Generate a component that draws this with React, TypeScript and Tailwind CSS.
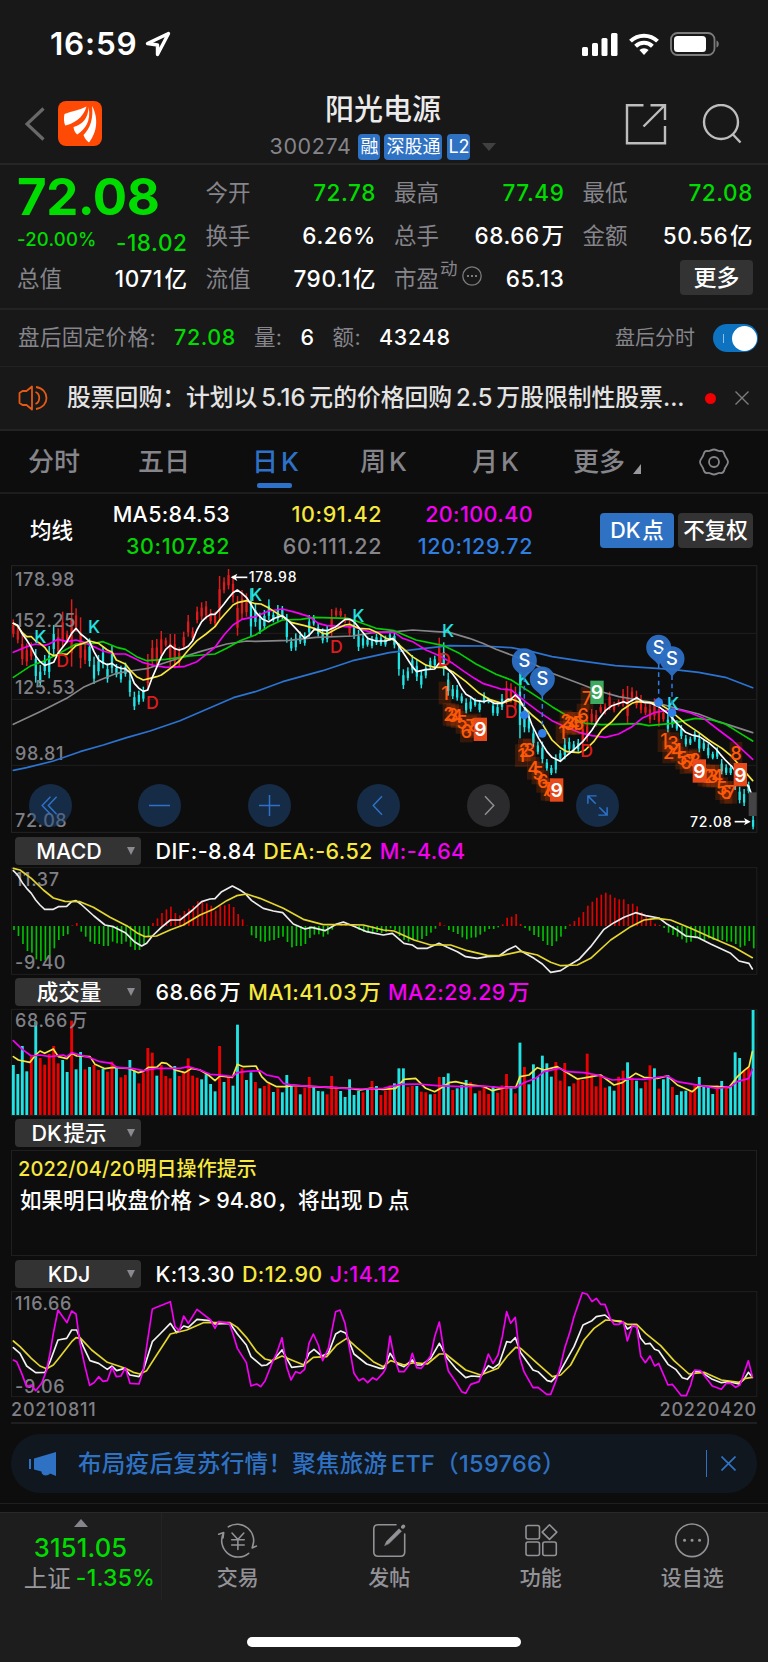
import type { ReactNode } from 'react';
import clsx from 'clsx';

// Charts are drawn in a 3x grid: 2304 units across the 768px screen
const STEP = 13.45;
const barX = (i: number) => 40 + i * STEP;

const RED = '#df1b1e';
const CYAN = '#21e3e3';
const YELLOW = '#f7e83e';
const PINK = '#f500f5';

const shift = (dx: number, pts: string) => pts.trim().split(/\s+/).map((p) => { const [x, y] = p.split(','); return `${Number(x) + dx},${y}`; }).join(' ');

const candles = `r178-232 r195-250 r225-315 r250-318 r247-300 c267-368 c315-382 c285-345 c258-355 c195-285 r205-290 r155-262 r212-250 r118-320 r145-215 r172-325 r250-312 c235-320 c290-372 c285-346 c258-325 c310-368 c257-340 c312-352 c317-368 c308-350 c340-410 c395-450 c392-434 c380-425
r282-392 r240-320 r237-322 r213-297 r233-260 r222-318 r222-325 r262-320 r215-268 r165-230 r202-242 r140-190 r127-180 r123-178 r147-192 r155-198 r48-180 r52-100 r27-88 r47-128 r108-227 r90-178 r100-170 c85-228 c130-200 c158-222 c150-210 c118-180 c155-187 c135-185
c138-178 c162-248 c233-273 c220-272 c215-252 c217-257 c165-230 c165-197 c190-230 c205-250 c198-247 r147-230 r143-172 r145-172 r162-190 r175-230 c182-237 c210-273 c222-265 c230-260 c228-265 c222-255 c225-258 c227-260 c215-243 c212-265 c250-347 c328-387 c322-362 c285-340
c298-363 c330-385 c312-355 c293-327 c287-323 r233-320 c247-347 c338-407 c375-417 c375-422 c400-430 c415-460 c412-455 c415-440 c420-457 c397-430 c413-430 c425-467 c430-468 c402-450 r363-433 r370-428 r380-450 c335-535 c440-517 c460-517 c503-560 c545-583 c545-610 c597-632
c615-645 c583-640 c570-603 c535-598 c533-575 c543-577 c537-575 r485-557 r480-545 r447-495 r450-500 r433-460 r430-463 r395-450 r425-457 r418-440 r387-440 r378-490 r382-425 r392-445 r405-460 r430-465 r430-490 r415-480 r425-500 r448-485 c463-517 c455-503 c480-512 c495-537
c525-560 c530-555 c513-545 c520-577 c540-573 c550-595 c575-598 c562-597 c597-643 c613-645 c615-645 c635-690 c680-730 c687-738 c665-700 c768-808`.split(/\s+/).map((s) => { const [top, bottom] = s.slice(1).split('-').map(Number); return { up: s[0] === 'r', top, bottom }; });

const ma5 = [
  shift(0, '40,190 53,196 67,222 80,240 94,262 107,288 120,305 134,316 147,312 161,307 174,280 188,262 201,245 215,220 228,205 242,222 255,232 269,245 282,275 296,300 309,308 322,314 336,310 349,320 363,325 376,326 390,338 403,370 417,385 430,394 443,390 457,352 470,322 484,290 497,268 511,256 524,266 538,270 551,266 565,258 578,242 591,210 605,185 618,172 632,163 645,163 659,148 672,132 685,115 699,98 712,90 726,100 739,112 753,133 766,155'),
  shift(768, '20,178 38,185 55,175 79,167 95,180 119,205 146,235 160,225 175,208 213,212 240,200 267,178 281,178 294,185 308,202 335,235 360,243 390,243 410,235 420,245 442,278 469,320 482,335 509,329 536,327 549,310 563,313 576,328 590,342 603,360 617,385 630,403 643,410 657,421 684,425 697,420 715,430 738,430 755,418 765,417'),
  shift(1536, '10,405 20,415 45,455 60,495 80,535 105,575 120,592 145,604 160,590 185,570 212,545 240,510 260,478 280,452 300,437 335,425 345,430 374,413 395,427 414,428 440,440 470,462 490,485 521,517 540,525 562,530 590,548 610,565 625,583 640,600 660,620 690,660 710,680 722,712'),
].join(' ');
const ma10 = [
  shift(0, '40,190 53,198 67,218 80,230 94,230 107,243 120,250 134,262 147,280 161,287 188,282 201,283 215,270 228,257 269,243 296,250 322,270 336,276 349,300 376,312 390,330 410,350 430,360 450,355 470,350 484,345 511,325 538,303 565,270 591,242 618,222 645,200 659,180 672,165 699,135 712,128 740,122 766,131'),
  shift(768, '15,132 40,145 79,170 105,187 146,197 175,205 200,220 213,222 240,207 267,195 281,193 308,205 340,207 365,218 390,235 415,240 435,260 469,290 509,315 536,322 563,322 590,335 630,365 670,400 700,418 738,430 766,420'),
  shift(1536, '0,418 20,425 60,465 90,490 120,540 145,563 165,575 200,578 220,570 245,545 270,510 300,485 330,450 360,430 374,425 440,430 475,452 520,490 560,517 590,540 630,565 660,590 690,625 722,662'),
].join(' ');
const ma20 = [
  shift(0, '40,277 80,260 107,252 134,256 147,252 174,238 201,245 228,240 255,248 282,260 309,273 345,282 376,282 403,295 430,308 457,315 497,322 551,320 591,305 645,262 672,225 699,195 726,178 766,170'),
  shift(768, '38,153 79,147 119,157 160,170 187,190 213,197 240,198 267,200 294,200 321,210 350,217 415,217 440,235 470,245 510,270 550,287 590,310 625,335 655,355 680,370 735,387 766,390'),
  shift(1536, '0,392 40,425 80,455 120,482 160,500 200,517 240,527 280,532 320,522 360,500 390,475 430,457 490,447 530,457 575,475 620,510 660,540 722,598'),
].join(' ');
const ma30 = [
  shift(0, '40,352 93,317 134,302 174,282 228,252 282,250 309,245 350,262 376,268 410,290 440,302 497,298 570,288 645,282 680,265 720,242 766,225'),
  shift(768, '40,198 79,180 135,178 173,172 275,175 300,183 360,205 415,212 480,240 563,257 610,280 660,312 720,343 766,360'),
  shift(1536, '60,400 120,440 170,470 220,490 270,494 380,491 410,497 480,490 550,475 600,480 640,492 680,517 722,543'),
].join(' ');
const ma60 = [
  shift(0, '40,493 120,455 200,415 250,382 300,360 350,340 390,333 445,325 520,300 600,275 680,252 740,243 766,244'),
  shift(768, '100,241 180,232 290,228 350,218 420,215 470,210 540,215 580,217 640,235 680,250 720,268 766,285'),
  shift(1536, '60,310 120,340 200,370 260,393 320,410 380,420 440,430 500,447 560,462 620,485 722,518'),
].join(' ');
const ma120 = [
  shift(0, '40,631 80,623 160,603 240,575 310,555 380,533 450,513 540,482 620,448 700,413 766,395'),
  shift(768, '80,365 200,332 290,302 400,278 480,268 580,257 680,258 766,263'),
  shift(1536, '60,275 120,290 200,302 310,317 400,323 480,328 560,337 640,352 722,383'),
].join(' ');

const signals: [string, number, number][] = [
  ['K', 103, 250], ['K', 264, 218], ['K', 750, 122], ['K', 1057, 187], ['K', 1326, 232], ['K', 1555, 375], ['K', 2001, 449],
  ['D', 169, 320], ['D', 438, 447], ['D', 990, 280], ['D', 1314, 317], ['D', 1514, 473], ['D', 1741, 591],
];

// [digit, centre x, centre y]
const counts: [number, number, number][] = [
  [1, 1335, 399], [2, 1347, 463], [3, 1358, 466], [4, 1371, 470], [5, 1386, 487], [7, 1412, 500], [8, 1424, 495], [6, 1399, 513],
  [1, 1564, 587], [2, 1573, 570], [3, 1588, 570], [4, 1600, 625], [5, 1614, 639], [6, 1628, 664], [7, 1641, 688], [8, 1654, 690],
  [1, 1686, 517], [2, 1698, 485], [3, 1708, 490], [4, 1721, 490], [5, 1735, 490], [6, 1749, 465], [7, 1761, 415],
  [1, 1992, 542], [2, 2006, 576], [3, 2019, 551], [4, 2031, 570], [5, 2045, 594], [6, 2058, 608], [7, 2072, 605], [8, 2085, 600],
  [1, 2112, 645], [2, 2126, 648], [3, 2138, 648], [4, 2152, 648], [5, 2165, 686], [6, 2178, 697], [7, 2192, 697], [8, 2208, 580],
];
const nines: [number, number, string][] = [[1441, 508, '#e8491a'], [1670, 690, '#e8491a'], [1791, 397, '#3dab5f'], [2098, 633, '#e8491a'], [2221, 644, '#e8491a']];
const pins: [number, number, number][] = [[1573, 302, 465], [1627, 357, 520], [1976, 262, 427], [2016, 296, 458]];

const macdBars = [300, 318, 342, 363, 368, 388, 393, 390, 375, 355, 330, 318, 313, 286, 279, 305, 320, 335, 342, 342, 348, 348, 335, 340, 342, 335, 350, 360, 360, 343, 322, 279, 265, 249, 238, 230, 249, 256, 243, 236, 227, 214, 215, 220, 227, 242, 228, 226, 222, 231, 252, 268, 287, 316, 324, 334, 336, 332, 330, 324, 320, 336, 352, 348, 348, 342, 324, 314, 313, 320, 313, 299, 288, 281, 281, 285, 290, 300, 306, 308, 311, 306, 309, 306, 295, 300, 318, 330, 335, 330, 330, 327, 318, 308, 296, 277, 286, 300, 306, 312, 322, 328, 323, 322, 314, 305, 297, 297, 292, 283, 263, 260, 252, 282, 294, 302, 315, 321, 333, 345, 348, 334, 320, 297, 283, 273, 262, 246, 227, 215, 203, 194, 188, 194, 203, 208, 208, 222, 221, 229, 247, 260, 265, 281, 285, 294, 308, 315, 320, 328, 338, 335, 325, 325, 330, 325, 330, 330, 330, 335, 335, 342, 352, 347, 333, 355];
const dif = [
  shift(0, '40,122 53,135 67,158 80,175 94,190 107,210 120,225 134,238 160,238 175,230 200,229 215,215 228,212 242,222 282,258 315,285 340,290 376,308 403,335 425,348 440,340 457,318 484,292 511,270 540,270 578,240 605,215 630,207 645,206 665,185 697,168 720,180 735,190 755,212 790,235 820,243 848,248 880,282 915,297 935,292 975,302 1010,282 1030,276 1065,290 1100,305 1150,315'),
  shift(1152, '25,310 60,340 85,345 100,355 130,355 165,340 190,352 220,365 245,380 280,385 310,380 345,378 370,360 395,348 410,362 450,385 475,402 500,427 530,422 545,412 585,388 620,350 660,298 690,278 720,262 755,248 785,257 825,264 850,283 880,300 905,318 940,322 980,342 1040,370 1065,393 1095,400 1105,417'),
].join(' ');
const dea = [
  shift(0, '40,115 60,120 94,145 130,180 160,204 195,214 240,215 280,232 330,262 380,287 410,308 435,320 470,318 510,300 550,285 600,255 640,238 680,212 710,197 740,192 780,205 850,235 910,268 970,284 1030,284 1090,285 1150,300'),
  shift(1152, '30,303 90,330 140,345 200,345 250,362 310,376 350,377 410,364 460,375 500,397 530,407 580,405 620,385 680,330 740,290 780,270 820,265 860,270 920,295 980,322 1050,352 1105,383'),
].join(' ');

const volumes = `c705 c732 c648 c724 r680 c575 r684 r704 r672 r648 r700 c690 c726 r572 c718 c666 r718 c711 r705 r720 c716 r725 r695 c713 r742 r735 c690 c722 r760 r728 r654 r668 c737 r705 r738 r745 c708 r738 r728 r685 r737 r743 c748 c733 c762 c784 r648 c756 r740 c767 c584 r715 c750 c727 r756 c775 r768 r760 c786 r775 c787 c735 c767 r770 c793 r773 r741 c772 c783 c784 r793 r738 r770 c783 c801 c748 c795 c783 r787 c778 r753 c768 r795
r782 r766 c760 c715 c715 r771 r768 c768 r785 r787 c793 r792 r741 c741 c730 r780 c775 c765 c750 r757 c790 r782 r773 r792 c768 r788 r766 r732 c770 r790 c638 r711 c763 c703 c740 c677 c700 c740 r696 r752 r699 c769 r760 r743 r750 r671 r733 r769 r735 r773 c769 c782 r740 r722 c697 r743 c752 c775 r755 r706 c715 r776 c748 c735 r771 c795 c784 c782 r782 r766 c741 c768 c772 c792 r766 c753 r772 c768 c667 c684 r722 r713 c540`.split(/\s+/);
const volMa1 = [
  shift(0, '40,680 55,690 90,697 107,675 120,663 134,670 160,657 175,680 201,686 215,670 230,678 270,680 285,703 315,716 340,712 385,715 415,728 430,724 445,712 470,712 485,698 500,700 525,720 555,728 575,715 600,720 625,735 645,752 660,738 697,742 712,703 730,710 768,708 785,740 800,755 830,770 860,770 880,766 940,770 1000,773 1050,775 1080,780 1110,775 1150,778'),
  shift(1152, '35,775 60,748 95,745 125,775 152,785 170,775 195,758 215,755 250,763 300,770 325,782 365,772 395,772 408,740 435,735 460,713 480,720 520,710 545,725 580,747 610,742 650,735 690,765 715,758 755,730 780,742 820,745 850,738 880,765 925,785 945,768 1000,770 1035,772 1060,740 1080,722 1095,710 1105,665'),
].join(' ');
const volMa2 = [
  shift(0, '40,632 67,658 94,678 120,675 150,680 190,675 200,680 215,668 240,675 270,683 300,695 335,700 350,712 400,716 430,722 470,715 540,715 565,710 600,720 630,733 660,735 697,740 712,728 740,724 780,722 800,735 835,742 850,760 880,766 950,770 1040,775 1090,777 1150,775'),
  shift(1152, '50,763 100,762 160,767 230,770 300,768 350,773 375,773 395,773 420,758 455,745 480,725 525,715 550,725 600,728 640,735 685,750 730,747 780,748 850,738 880,755 950,767 1000,775 1040,770 1060,755 1095,745 1105,718'),
].join(' ');

const kdjJ = [
  shift(0, '40,750 50,755 65,790 80,830 94,825 107,842 125,820 140,780 150,730 160,670 174,600 201,638 215,603 228,612 240,700 255,770 269,826 282,818 296,800 309,814 322,812 336,772 349,800 363,798 376,773 390,820 417,822 430,780 440,710 457,597 511,575 525,650 538,662 551,618 565,640 591,598 632,630 645,655 655,635 688,640 700,675 712,715 739,758 753,828 770,822 782,830 795,813 820,750 830,730 846,683 860,770 873,810 887,785 900,790 914,778 927,700 940,672 955,705 968,752 985,715 1007,605 1020,600 1035,640 1062,790 1077,812 1090,805 1103,818 1118,803 1130,810 1150,788'),
  shift(1152, '5,775 18,678 30,740 45,785 60,785 75,765 85,730 98,773 112,775 140,738 152,680 166,636 180,725 193,783 215,815 233,845 245,850 260,823 285,815 300,775 313,732 327,760 342,735 355,680 368,605 380,640 394,622 408,745 420,785 447,833 462,832 488,853 500,853 515,815 530,765 542,715 558,665 570,620 595,548 610,553 624,575 637,565 650,583 663,583 680,628 690,643 705,643 718,635 730,693 745,647 758,650 770,738 784,758 798,738 812,768 824,760 852,825 865,823 892,857 907,857 920,825 932,780 950,782 985,828 1012,838 1027,820 1040,820 1055,832 1068,825 1080,790 1093,752 1105,800'),
].join(' ');
const kdjK = [
  shift(0, '40,713 60,730 80,768 107,788 135,787 150,755 174,690 200,685 215,660 230,660 250,710 270,752 296,760 322,778 336,768 350,782 374,775 390,795 417,800 430,780 457,695 480,672 511,640 530,668 551,648 565,652 591,628 630,632 645,642 690,640 712,672 739,705 753,740 785,767 800,765 820,750 846,720 860,745 875,772 910,768 927,730 942,718 965,738 985,730 1007,672 1022,663 1038,670 1062,732 1100,762 1140,775 1150,775'),
  shift(1152, '5,765 18,730 40,762 60,770 85,750 98,765 112,765 140,745 166,700 190,745 215,775 245,803 262,798 290,800 313,767 327,775 345,762 368,695 380,697 394,683 410,728 447,780 462,785 490,812 502,815 525,790 570,710 597,645 624,632 637,620 663,615 680,630 718,637 730,657 745,648 758,650 770,685 784,702 798,700 812,718 824,722 852,763 875,778 895,803 910,808 930,785 950,785 985,808 1012,818 1035,815 1065,822 1080,808 1093,787 1105,802'),
].join(' ');
const kdjD = [
  shift(0, '40,693 60,710 94,745 120,768 140,776 160,765 180,740 215,695 228,683 242,685 275,720 322,757 376,775 400,787 420,792 440,782 470,735 511,672 560,660 610,638 690,638 712,652 739,682 770,725 795,747 815,752 846,738 880,752 912,765 940,742 980,740 1010,705 1040,685 1070,712 1120,755 1150,770'),
  shift(1152, '20,752 60,765 90,758 130,762 166,732 185,732 245,780 290,795 342,775 370,738 395,712 410,715 460,760 505,800 530,795 560,765 600,690 630,655 665,630 710,633 730,643 758,643 785,670 830,707 870,752 915,792 960,787 1012,810 1065,817 1085,805 1105,802'),
].join(' ');

function Line({ points, color, width = 5 }: { points: string; color: string; width?: number }) {
  return <polyline points={points} fill="none" stroke={color} strokeWidth={width} strokeLinejoin="round" strokeLinecap="round" />;
}

function AxisText({ y, children }: { y: number; children: ReactNode }) {
  return <text x={45} y={y} fontSize={54} fontWeight={500} fill="#808086" letterSpacing={1.8} wordSpacing={-12}>{children}</text>;
}

function Frame({ top, bottom, stroke = '#1f1f20' }: { top: number; bottom: number; stroke?: string }) {
  return <rect x={34.5} y={top} width={2236} height={bottom - top} fill="none" stroke={stroke} strokeWidth={3} />;
}

function PriceChart() {
  return (
    <svg viewBox="0 12 2304 810" className="block w-full h-[270px]">
      <Frame top={17} bottom={817} stroke="#242425" />
      {[220, 418, 616].map((y) => <path key={y} d={`M34 ${y}H2270`} stroke="#1f1f20" strokeWidth={3} />)}
      {candles.map((c, i) => {
        const h = c.bottom - c.top;
        return (
          <g key={i} fill={c.up ? RED : CYAN}>
            <rect x={barX(i) - 2.2} y={c.top} width={4.4} height={h} />
            <rect x={barX(i) - 3.4} y={c.top + h * 0.3} width={6.8} height={h * 0.5} />
          </g>
        );
      })}
      <AxisText y={78}>178.98</AxisText>
      <AxisText y={202}>152.25</AxisText>
      <AxisText y={401}>125.53</AxisText>
      <AxisText y={599}>98.81</AxisText>
      <AxisText y={800}>72.08</AxisText>
      <Line points={ma120} color="#2b74d2" />
      <Line points={ma60} color="#85858a" />
      <Line points={ma30} color="#04cf04" />
      <Line points={ma20} color={PINK} />
      <Line points={ma10} color={YELLOW} />
      <Line points={ma5} color="#fff" />
      {signals.map(([s, x, y]) => <text key={`${s}${x}`} x={x} y={y} fontSize={53} fontWeight={500} fill={s === 'K' ? CYAN : RED}>{s}</text>)}
      {counts.map(([n, x, y]) => (
        <g key={`${n}-${x}`}>
          <rect x={x - 19} y={y - 34} width={38} height={68} fill="#ff5500" fillOpacity={0.17} />
          <text x={x} y={y + 20} fontSize={55} fontWeight={500} fill="#ff5a0a" textAnchor="middle">{n}</text>
        </g>
      ))}
      {nines.map(([x, y, color]) => (
        <g key={x}>
          <rect x={x - 20} y={y - 35} width={40} height={70} fill={color} />
          <text x={x} y={y + 21} fontSize={58} fontWeight={600} fill="#fff" textAnchor="middle">9</text>
        </g>
      ))}
      {pins.map(([x, y, dot]) => (
        <g key={x}>
          <path d={`M${x} ${y + 50}V${dot}`} stroke="#2f7ee6" strokeWidth={4.5} strokeDasharray="14 11" />
          <circle cx={x} cy={dot} r={13} fill="#2f7ee6" />
          <path d={`M${x - 37.5} ${y}a37.5 37.5 0 1 1 75 0c0 24-18 34-27 42l-10.500 12-10.500-12c-9-8-27-18-27-42z`} fill="#2d6fc4" fillOpacity={0.95} />
          <text x={x} y={y + 19} fontSize={55} fontWeight={500} fill="#fff" textAnchor="middle">S</text>
        </g>
      ))}
      <rect x={2246} y={697} width={24} height={71} fill="#444446" />
      <path d="M700 52h42" stroke="#fff" strokeWidth={5} />
      <path d="M692 52l20-11-5 11 5 11z" fill="#fff" />
      <text x={746} y={67} fontSize={42} fontWeight={500} fill="#fff" letterSpacing={2.4}>178.98</text>
      <text x={2070} y={801} fontSize={42} fontWeight={500} fill="#fff" letterSpacing={2.4}>72.08</text>
      <path d="M2204 785h40" stroke="#fff" strokeWidth={5} />
      <path d="M2252 785l-20-11 5 11-5 11z" fill="#fff" />
    </svg>
  );
}

function MacdChart() {
  return (
    <svg viewBox="0 108 2304 330" className="block w-full h-[110px]">
      <Frame top={113} bottom={433} />
      <AxisText y={167}>11.37</AxisText>
      <AxisText y={418}>-9.40</AxisText>
      {macdBars.map((y, i) => <rect key={i} x={barX(i) - 0.5} y={Math.min(288, y)} width={5} height={Math.abs(y - 288)} fill={y < 288 ? '#e00000' : '#00c000'} />)}
      <Line points={dif} color="#ececec" />
      <Line points={dea} color="#e3d62f" />
    </svg>
  );
}

function VolumeChart() {
  return (
    <svg viewBox="0 534 2304 327" className="block w-full h-[109px]">
      <Frame top={538} bottom={857} />
      {volumes.map((v, i) => { const y = Number(v.slice(1)); return <rect key={i} x={barX(i) - 4.3} y={y} width={8.6} height={855 - y} fill={v[0] === 'r' ? '#ec0000' : CYAN} />; })}
      <AxisText y={591}>68.66 万</AxisText>
      <Line points={volMa1} color={YELLOW} />
      <Line points={volMa2} color={PINK} />
    </svg>
  );
}

function KdjChart() {
  return (
    <svg viewBox="0 540 2304 324" className="block w-full h-[108px]">
      <Frame top={545} bottom={860} />
      <AxisText y={599}>116.66</AxisText>
      <AxisText y={849}>-9.06</AxisText>
      <Line points={kdjK} color="#f2f2f2" />
      <Line points={kdjD} color="#e3d62f" />
      <Line points={kdjJ} color={PINK} />
    </svg>
  );
}

function ToolButton({ muted, children }: { muted?: boolean; children: ReactNode }) {
  return (
    <button className={clsx('size-[43px] rounded-full flex items-center justify-center', muted ? 'bg-[#2b2b2d]' : 'bg-[#1f4a7d]/50')}>
      <svg viewBox="0 0 24 24" fill="none" stroke={muted ? '#8e8e93' : '#2d72c8'} strokeWidth="1.7" className="w-[21px] h-[21px]">{children}</svg>
    </button>
  );
}

function IndicatorHeader({ name, children }: { name: string; children?: ReactNode }) {
  return (
    <div className="flex items-center h-[28px] pl-[15px] text-[21.500px] font-medium leading-none text-white tracking-[0.4px] [word-spacing:-4px]">
      <div className="relative w-[126px] h-[28px] rounded-[4px] bg-[#333334] flex items-center justify-center pr-[18px] pt-[1px] mr-[14.500px] tracking-normal">
        {name}
        <svg viewBox="0 0 8 8" className="absolute right-[6px] top-[10px] size-2"><path d="M0 0h8L4 8z" fill="#8a8a8f" /></svg>
      </div>
      <div className="flex gap-[7px] pt-[1px] whitespace-nowrap">{children}</div>
    </div>
  );
}

function Stat({ label, value, green }: { label: ReactNode; value: string; green?: boolean }) {
  return (
    <div className="flex items-center justify-between h-[43px]">
      <span className="text-[#85858b] flex items-center">{label}</span>
      <span className={clsx('font-medium whitespace-nowrap tracking-[0.6px] [word-spacing:-5px]', green ? 'text-[#00dc00]' : 'text-white')}>{value}</span>
    </div>
  );
}

function NavItem({ label, children }: { label: string; children: ReactNode }) {
  return (
    <div className="flex-1 flex flex-col items-center pt-[10px]">
      <svg viewBox="0 0 38 36" fill="none" stroke="#929297" strokeWidth="1.6" strokeLinejoin="round" strokeLinecap="round" className="w-[38px] h-[36px] overflow-visible">{children}</svg>
      <span className="mt-[7px] text-[21px] leading-[24px] font-medium text-[#929297]">{label}</span>
    </div>
  );
}

export default function App() {
  return (
    <div className="w-[768px] h-[1662px] overflow-hidden flex flex-col bg-[#0d0d0d] font-[Inter,'Noto_Sans_CJK_SC',sans-serif]">
      <div className="bg-[#181818] h-[431px] shrink-0 border-b-2 border-[#232324]">
        {/* status bar */}
        <div className="flex items-center h-[88px] pl-[50px] pr-[48px]">
          <span className="text-[31.500px] font-semibold text-white leading-none tracking-[0.8px]">16:59</span>
          <svg viewBox="0 0 26 26" className="ml-[8px] size-[26px]" fill="none" stroke="#fff" strokeWidth="3.400" strokeLinejoin="round"><path d="M23.500 2.500L2.500 12.500l10 1.500 0 9.500z" /></svg>
          <svg viewBox="0 0 36 23" className="ml-auto w-[36px] h-[23px]" fill="#fff"><rect x="0" y="14" width="6" height="9" rx="1.500" /><rect x="10" y="10" width="6" height="13" rx="1.500" /><rect x="19.500" y="5" width="6" height="18" rx="1.500" /><rect x="29" y="0" width="6.500" height="23" rx="1.500" /></svg>
          <svg viewBox="0 0 30 22" className="ml-[11px] w-[30px] h-[22px]" fill="none" stroke="#fff" strokeWidth="4"><path d="M1.500 8.200a19.200 19.200 0 0 1 27 0" /><path d="M6.600 13.200a12 12 0 0 1 16.800 0" /><path d="M15 22l-4.600-4.900a6.600 6.600 0 0 1 9.200 0z" fill="#fff" stroke="none" /></svg>
          <svg viewBox="0 0 50 24" className="ml-[11px] w-[50px] h-[24px]"><rect x="1" y="1" width="43.500" height="22" rx="6.500" fill="none" stroke="#7c7c7c" strokeWidth="1.800" /><rect x="4" y="4" width="32" height="16" rx="3.500" fill="#fff" /><path d="M46.500 8.500c3 1 3 6 0 7z" fill="#7c7c7c" /></svg>
        </div>
        {/* title */}
        <div className="flex h-[77px] border-b-2 border-[#262627] pl-[25px] pr-[26px]">
          <svg viewBox="0 0 20 34" className="mt-[19px] w-[20px] h-[34px]" fill="none" stroke="#69696b" strokeWidth="3.200"><path d="M18.500 1.500L2 17l16.500 15.500" /></svg>
          <svg viewBox="0 0 44 45" className="ml-[13px] mt-[13px] w-[44px] h-[45px]">
            <rect width="44" height="45" rx="8" fill="#ff4a05" />
            <g fill="#fff"><path d="M28.500 5.500C22 9 14 10 6.500 13c-.8 3.500-.8 8 .7 11.500C15 23 25.500 17 28.500 5.500z" /><path d="M30.500 6C30.500 17 24 24 15.500 26c.3 3 1.500 5.500 3.700 7.500C27 28.500 33.500 20 30.500 6z" /><path d="M34 5c4.800 8 7.500 23-3 36.500-2.500-1.800-4.500-4.500-5.500-7.500C32.500 27 35.500 17 34 5z" /></g>
          </svg>
          <div className="flex-1 flex flex-col items-center pl-[39px]">
            <div className="text-[29px] leading-[34px] mt-[5px] font-medium text-[#ebebeb]">阳光电源</div>
            <div className="flex items-center mt-[7px] text-[20px] leading-none text-white">
              <span className="text-[21.500px] text-[#85858b] tracking-[0.6px] mr-[7px]">300274</span>
              <span className="h-[26px] w-[22px] rounded-[4px] bg-[#2f72c4] flex items-center justify-center text-[18px]">融</span>
              <span className="ml-[4px] h-[26px] w-[58px] rounded-[4px] bg-[#2f72c4] flex items-center justify-center text-[18px]">深股通</span>
              <span className="ml-[5px] h-[26px] w-[23px] rounded-[4px] bg-[#2f72c4] flex items-center justify-center text-[18px]">L2</span>
              <svg viewBox="0 0 14 8" className="ml-[12px] w-[14px] h-[8px]"><path d="M0 0h14L7 8z" fill="#404042" /></svg>
            </div>
          </div>
          <svg viewBox="0 0 42 42" className="mt-[15px] w-[42px] h-[42px]" fill="none" stroke="#bdbdbe" strokeWidth="2.400"><path d="M18.500 2.200H2v38h38V23" /><path d="M18.500 23.500L39 3M25.500 2.200H40V17" /></svg>
          <svg viewBox="0 0 40 40" className="ml-[35px] mt-[16px] w-[40px] h-[40px]" fill="none" stroke="#bdbdbe" strokeWidth="2.400"><circle cx="19" cy="18" r="17" /><path d="M30.500 30l8 8.500" /></svg>
        </div>
        {/* quote */}
        <div className="grid grid-cols-4 gap-x-[18px] h-[145px] pl-[17px] pr-[15px] pt-[7px] text-[22.500px] leading-none border-b-2 border-[#232324]">
          <div>
            <div className="h-[49px] flex items-center text-[51px] font-bold text-[#00dc00] tracking-[-0.5px]">72.08</div>
            <div className="h-[37px] flex items-center justify-between text-[#00dc00]"><span className="text-[18.500px] pb-[1px] font-medium tracking-[0.2px]">-20.00%</span><span className="font-medium pt-[7px] tracking-[0.6px]">-18.02</span></div>
            <Stat label="总值" value="1071 亿" />
          </div>
          <div><Stat label="今开" value="72.78" green /><Stat label="换手" value="6.26%" /><Stat label="流值" value="790.1 亿" /></div>
          <div>
            <Stat label="最高" value="77.49" green />
            <Stat label="总手" value="68.66 万" />
            <Stat
              label={<>市盈<span className="text-[17.500px] -mt-[22px] ml-[1px]">动</span><svg viewBox="0 0 20 20" className="size-5 ml-[4px] -mt-[8px]" fill="none" stroke="#7a7a7f" strokeWidth="1.300"><circle cx="10" cy="10" r="9.200" /><path d="M5 10h2M9 10h2M13 10h2" strokeWidth="2" /></svg></>}
              value="65.13"
            />
          </div>
          <div>
            <Stat label="最低" value="72.08" green />
            <Stat label="金额" value="50.56 亿" />
            <div className="ml-auto mt-[2px] w-[73px] h-[35px] rounded-[4px] bg-[#333334] text-white text-[23px] font-medium flex items-center justify-center pt-[1px]">更多</div>
          </div>
        </div>
        {/* after-hours */}
        <div className="flex items-center h-[57px] pl-[18px] pr-[10px] text-[21.500px] leading-none text-[#85858b] border-b border-[#222223]">
          <span className="tracking-[0.4px]">盘后固定价格:</span>
          <span className="ml-[18px] text-[#00dc00] font-medium tracking-[0.6px]">72.08</span>
          <span className="ml-[18px] tracking-[0.4px]">量:</span>
          <span className="ml-[18px] text-white font-medium tracking-[0.6px]">6</span>
          <span className="ml-[18px] tracking-[0.4px]">额:</span>
          <span className="ml-[18px] text-white font-medium tracking-[0.7px]">43248</span>
          <span className="ml-auto text-[20px]">盘后分时</span>
          <span className="ml-[18px] w-[45px] h-[28px] rounded-full bg-[#0d72bf] flex items-center justify-between pl-[10px] pr-[1px]">
            <span className="w-px h-[9px] bg-[#8fc0e4]" />
            <span className="size-[25px] rounded-full bg-white" />
          </span>
        </div>
        {/* news */}
        <div className="flex items-center h-[62px] pl-[18px] pr-[18px] leading-none">
          <svg viewBox="0 0 30 26" className="w-[30px] h-[26px]" fill="none" stroke="#e65a14" strokeWidth="1.800" strokeLinejoin="round"><path d="M14 1.500v23L8.500 20H4.500L1.500 18V8l3-2h4z" /><path d="M17.500 7c5 2 5 10 0 12M18 2c14 2 14 20 0 22" /></svg>
          <span className="ml-[19px] text-[23.800px] text-[#e3e3e3] whitespace-nowrap w-[618px] font-medium [word-spacing:-2.400px]">股票回购：计划以 5.16 元的价格回购 2.5 万股限制性股票...</span>
          <span className="ml-[20px] size-[11px] rounded-full bg-[#f00000] shrink-0" />
          <svg viewBox="0 0 14 14" className="ml-[19px] size-[14px]" stroke="#7c7c80" strokeWidth="1.400"><path d="M.5.5l13 13M13.500.5l-13 13" /></svg>
        </div>
      </div>

      {/* period tabs */}
      <div className="relative shrink-0 h-[63px] border-b-2 border-[#1d1d1e] flex items-center text-[26px] leading-none text-[#85858b] pl-[28px] font-medium [word-spacing:-4px]">
        <span className="w-[110px]">分时</span>
        <span className="w-[114px]">五日</span>
        <span className="w-[108px] text-[#2d72c8]">日 K</span>
        <span className="w-[112px]">周 K</span>
        <span className="w-[101px]">月 K</span>
        <span>更多</span>
        <svg viewBox="0 0 8 10" className="ml-[8px] mt-[14px] w-[8px] h-[10px]"><path d="M8 0v10H0z" fill="#98989d" /></svg>
        <svg viewBox="0 0 30 28" className="ml-[58px] w-[30px] h-[28px]" fill="none" stroke="#85858b" strokeWidth="1.800" strokeLinejoin="round"><path d="M8.500 3c2 .8 4-1.500 6.500-1.500S19.500 3.800 21.500 3c2.500-.5 3.500 1.500 4 3.500.5 3 3.500 4.500 3.500 7.500s-3 4.500-3.500 7.500c-.5 2-1.500 4-4 3.500-2-.8-4 1.500-6.500 1.500S10.500 24.200 8.500 25c-2.500.5-3.500-1.500-4-3.500C4 18.500 1 17 1 14s3-4.500 3.500-7.500c.5-2 1.500-4 4-3.500z" /><circle cx="15" cy="14" r="5" /></svg>
        <span className="absolute left-[257px] bottom-[4px] w-[35px] h-[5px] rounded-[2px] bg-[#2d72c8]" />
      </div>

      {/* moving averages */}
      <div className="shrink-0 h-[70px] flex items-center pt-[3px] text-[21.500px] font-medium leading-none">
        <span className="ml-[30px] w-[43px] text-white">均线</span>
        <div className="grid grid-cols-[157px_152px_151px] gap-y-[11px] text-right tracking-[0.6px]">
          <span className="text-white tracking-[0.3px]">MA5:84.53</span><span className="text-[#f7e83e]">10:91.42</span><span className="text-[#f500f5] tracking-[0.400px]">20:100.40</span>
          <span className="text-[#04d404]">30:107.82</span><span className="text-[#85858b]">60:111.22</span><span className="text-[#2f7ee0]">120:129.72</span>
        </div>
        <span className="ml-[67px] w-[74px] h-[35px] rounded-[4px] bg-[#2f72c4] text-white flex items-center justify-center [word-spacing:-4px]">DK 点</span>
        <span className="ml-[4px] w-[75px] h-[35px] rounded-[4px] bg-[#333334] text-white flex items-center justify-center">不复权</span>
      </div>

      <div className="relative shrink-0">
        <PriceChart />
        <div className="absolute left-[29px] top-[220px] flex gap-[66.400px]">
          <ToolButton><path d="M12 2L2.500 12l9.500 10M19 2L9.500 12l9.500 10" /></ToolButton>
          <ToolButton><path d="M0 12h24" /></ToolButton>
          <ToolButton><path d="M0 12h24M12 0v24" /></ToolButton>
          <ToolButton><path d="M16 1.500L6 12l10 10.500" /></ToolButton>
          <ToolButton muted><path d="M8 1.500L18 12 8 22.500" /></ToolButton>
          <ToolButton><path d="M1 10V1h10M1 1l9 9M23 14v9h-10M23 23l-9-9" /></ToolButton>
        </div>
      </div>

      <div className="shrink-0 pt-[3px]">
        <IndicatorHeader name="MACD"><span>DIF:-8.84</span><span className="text-[#f7e83e]">DEA:-6.52</span><span className="text-[#f500f5]">M:-4.64</span></IndicatorHeader>
        <div className="mt-[1px]"><MacdChart /></div>
      </div>
      <div className="shrink-0 mt-[2px]">
        <IndicatorHeader name="成交量"><span>68.66 万</span><span className="text-[#f7e83e]">MA1:41.03 万</span><span className="text-[#f500f5]">MA2:29.29 万</span></IndicatorHeader>
        <div className="mt-[2px]"><VolumeChart /></div>
      </div>
      <div className="shrink-0 mt-[2px]">
        <IndicatorHeader name="DK 提示" />
        <div className="mt-[3px] mx-[11px] h-[106px] border border-[#1f1f20] px-[6px] pt-[5px] font-medium text-white">
          <div className="text-[20px] leading-[26px] text-[#f7e83e] [word-spacing:-4px] tracking-[0.1px]">2022/04/20 明日操作提示</div>
          <div className="pl-[2px] pt-[1px] text-[21.500px] leading-[34px] [word-spacing:-0.800px]">如果明日收盘价格 &gt; 94.80，将出现 D 点</div>
        </div>
      </div>
      <div className="shrink-0 mt-[4px]">
        <IndicatorHeader name="KDJ"><span>K:13.30</span><span className="text-[#f7e83e]">D:12.90</span><span className="text-[#f500f5]">J:14.12</span></IndicatorHeader>
        <div className="mt-[2px]"><KdjChart /></div>
        <div className="mx-[11px] flex justify-between h-[26px] pt-[3px] text-[18px] leading-[18px] tracking-[0.8px] font-medium text-[#808086] border-b-2 border-[#1f1f20]"><span>20210811</span><span>20220420</span></div>
      </div>

      {/* promo banner */}
      <div className="shrink-0 mx-[11px] mt-[10px] h-[59px] rounded-[29px] bg-[#10171f] flex items-center pl-[18px] pr-[21px] text-[#2f72c4]">
        <svg viewBox="0 0 27 24" className="w-[27px] h-[24px]" fill="#2f72c4"><path d="M0 7h2v10H0zM5 6.500L27 0v24l-6-2.500c-1 2-5 2.500-6.500 1.500s-2-2-2-3.500L5 17.500z" /></svg>
        <span className="ml-[22px] text-[23.500px] leading-none font-medium whitespace-nowrap tracking-[0.3px] [word-spacing:-3px]">布局疫后复苏行情！聚焦旅游 ETF（159766）</span>
        <span className="ml-auto w-[1.500px] h-[27px] bg-[#2f72c4]" />
        <svg viewBox="0 0 15 15" className="ml-[14px] size-[15px]" stroke="#2f72c4" strokeWidth="1.700"><path d="M.5.5l14 14M14.500.5l-14 14" /></svg>
      </div>

      {/* bottom bar */}
      <div className="shrink-0 mt-[10px] h-[9px] border-t border-[#1f1f20]" />
      <div className="flex-1 bg-[#1d1d1d] border-t border-[#29292a]">
        <div className="flex h-[87px]">
          <div className="w-[162px] border-r border-[#242425] flex flex-col items-center pt-[6px] leading-none">
            <svg viewBox="0 0 14 8" className="w-[14px] h-[8px]"><path d="M7 0l7 8H0z" fill="#85858b" /></svg>
            <span className="mt-[8px] text-[25.500px] font-medium text-[#00dc00] tracking-[0.2px]">3151.05</span>
            <span className="mt-[6px] ml-[18px] flex items-center gap-[5px] text-[23.500px] whitespace-nowrap text-[#98989d]">上证<span className="text-[23px] font-medium text-[#00dc00] tracking-[0.2px]">-1.35%</span></span>
          </div>
          <NavItem label="交易"><path d="M9.300 3.800A16.500 16.500 0 0 1 33.200 24.500M33.200 25l4.300-2M33.200 25l1.500-6.500M29.700 30.300A16.500 16.500 0 0 1 4.700 9.700M-.3 11.300l5-1.800-.7 5.500" /><path d="M13 10l5.900 6.500 5.900-6.500M18.900 16.500v10M12.700 16.800h12.500M12.700 22h12.500" /></NavItem>
          <NavItem label="发帖"><path d="M26 1.800H8Q3.800 1.800 3.800 6v23q0 4.200 4.200 4.200h22.500q4.200 0 4.200-4.200V11" /><path d="M14.800 22.300l1.800-4L29 5.800l2.500 2.500L19 20.500z" fill="#929297" strokeWidth=".6" /><path d="M32.800 3.900l.6-.6" strokeWidth="3.600" /></NavItem>
          <NavItem label="功能"><rect x="4" y="2.500" width="13.500" height="13.500" rx="2" /><rect x="4" y="19" width="13.500" height="13.500" rx="2" /><rect x="20.800" y="19" width="13.500" height="13.500" rx="2" /><path d="M27.500 1.800l7.300 7.300-7.300 7.300-7.300-7.300z" /></NavItem>
          <NavItem label="设自选"><circle cx="19" cy="17.300" r="16.300" /><path d="M11.500 17.300h.1M19 17.300h.1M26.500 17.300h.1" strokeWidth="3" /></NavItem>
        </div>
        <div className="mx-auto mt-[37px] w-[274px] h-[10px] rounded-full bg-white" />
      </div>
    </div>
  );
}
